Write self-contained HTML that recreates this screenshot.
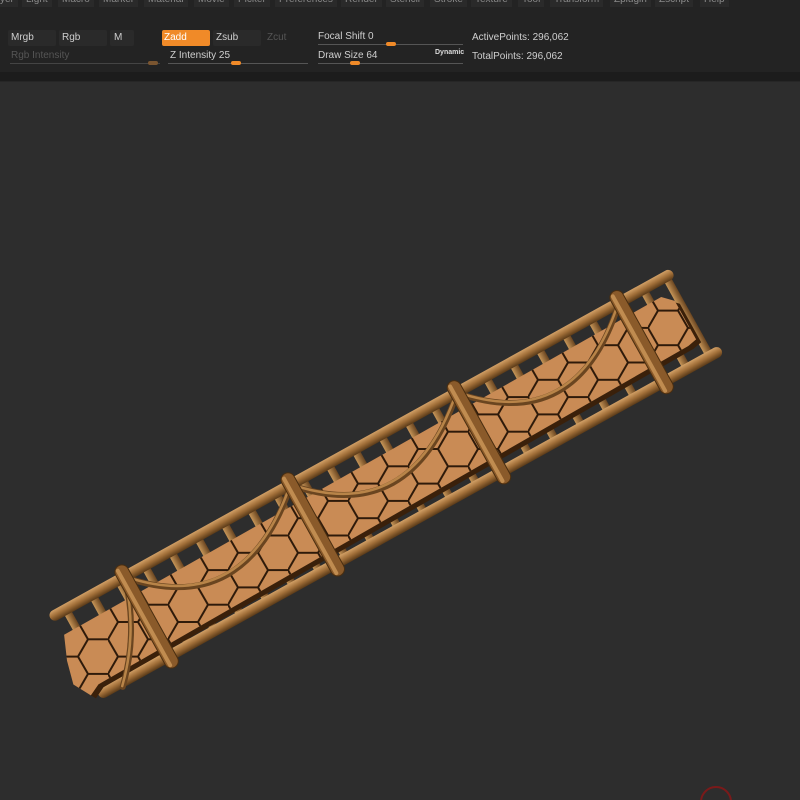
<!DOCTYPE html>
<html><head><meta charset="utf-8"><style>
html,body{margin:0;padding:0;width:800px;height:800px;overflow:hidden;background:#2d2d2d;font-family:"Liberation Sans",sans-serif}
.top{position:absolute;left:0;top:0;width:800px;height:72px;background:#232323}
.menu{position:absolute;top:-6px;left:0;height:14px;font-size:10px;color:#8a8a8a;white-space:nowrap}
.menu span{position:absolute;top:0;background:#2a2a2a;padding:0 4px;height:13px;line-height:12px}
.strip{position:absolute;left:0;top:72px;width:800px;height:9px;background:#1c1c1c;border-bottom:1px solid #262626}
.t{position:absolute;font-size:10px;color:#cfcfcf;line-height:12px;white-space:nowrap}
.btn{position:absolute;height:16px;background:#2a2a2a;border-radius:2px}
.sl{position:absolute;height:1px;background:#555}
.kn{position:absolute;width:10px;height:4px;border-radius:2px;background:#f08a28}
</style></head><body>
<div class="top">
<div class="menu">
<span style="left:-4px">yer</span><span style="left:22px">Light</span><span style="left:58px">Macro</span><span style="left:99px">Marker</span><span style="left:144px">Material</span><span style="left:194px">Movie</span><span style="left:234px">Picker</span><span style="left:275px">Preferences</span><span style="left:341px">Render</span><span style="left:386px">Stencil</span><span style="left:430px">Stroke</span><span style="left:471px">Texture</span><span style="left:518px">Tool</span><span style="left:550px">Transform</span><span style="left:610px">Zplugin</span><span style="left:655px">Zscript</span><span style="left:700px">Help</span>
</div>
<div class="btn" style="left:8px;top:30px;width:48px"></div>
<div class="btn" style="left:59px;top:30px;width:48px"></div>
<div class="btn" style="left:110px;top:30px;width:24px"></div>
<div class="btn" style="left:162px;top:30px;width:48px;background:#f08a28"></div>
<div class="btn" style="left:213px;top:30px;width:48px"></div>
<div class="t" style="left:11px;top:32px">Mrgb</div>
<div class="t" style="left:62px;top:32px">Rgb</div>
<div class="t" style="left:114px;top:32px">M</div>
<div class="t" style="left:164px;top:32px;color:#fff">Zadd</div>
<div class="t" style="left:216px;top:32px">Zsub</div>
<div class="t" style="left:267px;top:32px;color:#555">Zcut</div>
<div class="t" style="left:11px;top:50px;color:#555">Rgb Intensity</div>
<div class="sl" style="left:10px;top:63px;width:150px;background:#444"></div>
<div class="kn" style="left:148px;top:61px;background:#7a5530"></div>
<div class="t" style="left:170px;top:50px">Z Intensity 25</div>
<div class="sl" style="left:168px;top:63px;width:140px"></div>
<div class="kn" style="left:231px;top:61px"></div>
<div class="t" style="left:318px;top:31px">Focal Shift 0</div>
<div class="sl" style="left:318px;top:44px;width:145px"></div>
<div class="kn" style="left:386px;top:42px"></div>
<div class="t" style="left:318px;top:50px">Draw Size 64</div>
<div class="sl" style="left:318px;top:63px;width:145px"></div>
<div class="kn" style="left:350px;top:61px"></div>
<div class="t" style="left:435px;top:47px;font-size:7px;font-weight:bold;color:#ddd">Dynamic</div>
<div class="t" style="left:472px;top:32px">ActivePoints: 296,062</div>
<div class="t" style="left:472px;top:51px">TotalPoints: 296,062</div>
</div>
<div class="strip"></div>
<svg width="800" height="800" style="position:absolute;left:0;top:0">
<defs>
<pattern id="hex" width="60" height="34.6" patternUnits="userSpaceOnUse" patternTransform="rotate(29) translate(0,8)">
<path d="M0,17.3 L10,0 L30,0 L40,17.3 L30,34.6 L10,34.6 Z M40,17.3 L60,17.3" fill="none" stroke="#2e1a0a" stroke-width="2"/>
</pattern>
<linearGradient id="tube" x1="0" y1="0" x2="0" y2="1"><stop offset="0" stop-color="#d2a066"/><stop offset=".5" stop-color="#a06e38"/><stop offset="1" stop-color="#5a3a18"/></linearGradient>
<linearGradient id="rung" x1="0" y1="0" x2="1" y2="0"><stop offset="0" stop-color="#c79658"/><stop offset="1" stop-color="#6a4520"/></linearGradient>
</defs>
<g transform="translate(48,614) rotate(-29)">
<g fill="url(#rung)">
<rect x="14" y="4" width="8" height="92"/><rect x="44" y="4" width="8" height="92"/><rect x="74" y="4" width="8" height="92"/><rect x="104" y="4" width="8" height="92"/><rect x="134" y="4" width="8" height="92"/><rect x="164" y="4" width="8" height="92"/><rect x="194" y="4" width="8" height="92"/><rect x="224" y="4" width="8" height="92"/><rect x="254" y="4" width="8" height="92"/><rect x="284" y="4" width="8" height="92"/><rect x="314" y="4" width="8" height="92"/><rect x="344" y="4" width="8" height="92"/><rect x="374" y="4" width="8" height="92"/><rect x="404" y="4" width="8" height="92"/><rect x="434" y="4" width="8" height="92"/><rect x="464" y="4" width="8" height="92"/><rect x="494" y="4" width="8" height="92"/><rect x="524" y="4" width="8" height="92"/><rect x="554" y="4" width="8" height="92"/><rect x="584" y="4" width="8" height="92"/><rect x="614" y="4" width="8" height="92"/><rect x="644" y="4" width="8" height="92"/><rect x="674" y="4" width="8" height="92"/><rect x="700" y="4" width="8" height="92"/>
</g>
<rect x="0" y="-1" width="712" height="11" rx="5.5" fill="url(#tube)"/>
<rect x="5" y="90" width="712" height="11" rx="5.5" fill="url(#tube)"/>
<path d="M-6,50 L4,26 L690,20 L700,30 L700,74 L690,76 L10,86 L-2,92 L-12,74 Z" fill="#3a200a" transform="translate(3,5)"/>
<path d="M-6,50 L4,26 L690,20 L700,30 L700,74 L690,76 L10,86 L-2,92 L-12,74 Z" fill="#c98b55"/>
<path d="M-6,50 L4,26 L690,20 L700,30 L700,74 L690,76 L10,86 L-2,92 L-12,74 Z" fill="url(#hex)"/>
<g fill="none" stroke="#6a4520" stroke-width="6" stroke-linecap="round">
<path d="M85,5 Q170,100 275,5"/><path d="M275,5 Q360,100 465,5"/><path d="M465,5 Q550,100 650,5"/>
<path d="M30,100 Q70,60 85,5"/>
</g>
<g fill="none" stroke="#b88448" stroke-width="2.5" stroke-linecap="round">
<path d="M85,4 Q170,98 275,4"/><path d="M275,4 Q360,98 465,4"/><path d="M465,4 Q550,98 650,4"/><path d="M30,99 Q70,59 85,4"/>
</g>
<g fill="#8a5a2a" stroke="#4a2e10" stroke-width="1">
<rect x="78" y="-8" width="14" height="116" rx="7"/>
<rect x="268" y="-8" width="14" height="116" rx="7"/>
<rect x="458" y="-8" width="14" height="116" rx="7"/>
<rect x="644" y="-8" width="14" height="116" rx="7"/>
</g>
<g fill="#c08c50"><rect x="80" y="-6" width="4" height="112" rx="2"/><rect x="270" y="-6" width="4" height="112" rx="2"/><rect x="460" y="-6" width="4" height="112" rx="2"/><rect x="646" y="-6" width="4" height="112" rx="2"/></g>
</g>
<circle cx="716" cy="802" r="15" fill="none" stroke="#7a1a1a" stroke-width="2"/>
</svg>
</body></html>
